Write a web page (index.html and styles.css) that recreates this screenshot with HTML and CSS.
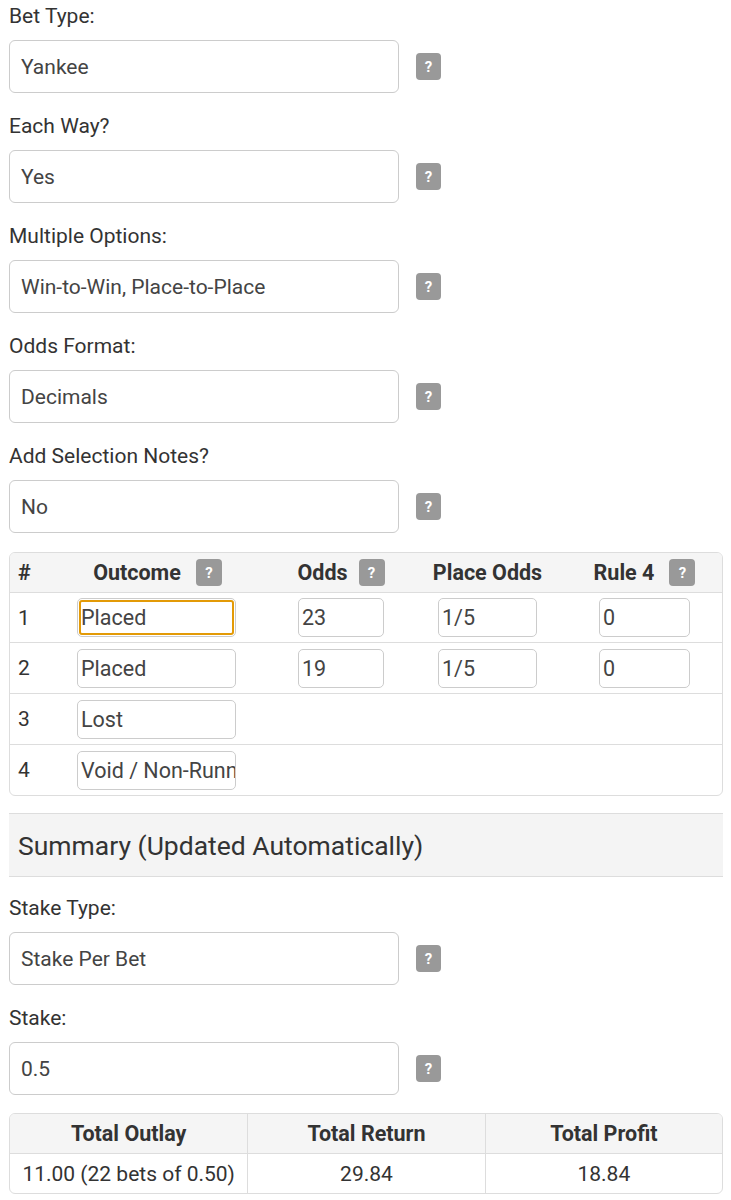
FILE: index.html
```html
<!DOCTYPE html>
<html>
<head>
<meta charset="utf-8">
<link rel="stylesheet" href="styles.css">
</head>
<body>
<div class="page">
  <div class="group">
    <div class="label">Bet Type:</div>
    <div class="field-row"><div class="select">Yankee</div><span class="help">?</span></div>
  </div>
  <div class="group">
    <div class="label">Each Way?</div>
    <div class="field-row"><div class="select">Yes</div><span class="help">?</span></div>
  </div>
  <div class="group">
    <div class="label">Multiple Options:</div>
    <div class="field-row"><div class="select">Win-to-Win, Place-to-Place</div><span class="help">?</span></div>
  </div>
  <div class="group">
    <div class="label">Odds Format:</div>
    <div class="field-row"><div class="select">Decimals</div><span class="help">?</span></div>
  </div>
  <div class="group">
    <div class="label">Add Selection Notes?</div>
    <div class="field-row"><div class="select">No</div><span class="help">?</span></div>
  </div>

  <div class="sel-table">
    <div class="row head">
      <div class="cell c-num left">#</div>
      <div class="cell c-out">Outcome<span class="help sm">?</span></div>
      <div class="cell c-odds">Odds<span class="help sm tight">?</span></div>
      <div class="cell c-place">Place Odds</div>
      <div class="cell c-rule">Rule 4<span class="help sm">?</span></div>
    </div>
    <div class="row first">
      <div class="cell c-num left">1</div>
      <div class="cell c-out"><div class="box w-out focus">Placed</div></div>
      <div class="cell c-odds"><div class="box w-odds">23</div></div>
      <div class="cell c-place"><div class="box w-place">1/5</div></div>
      <div class="cell c-rule"><div class="box w-rule">0</div></div>
    </div>
    <div class="row">
      <div class="cell c-num left">2</div>
      <div class="cell c-out"><div class="box w-out">Placed</div></div>
      <div class="cell c-odds"><div class="box w-odds">19</div></div>
      <div class="cell c-place"><div class="box w-place">1/5</div></div>
      <div class="cell c-rule"><div class="box w-rule">0</div></div>
    </div>
    <div class="row">
      <div class="cell c-num left">3</div>
      <div class="cell c-out"><div class="box w-out">Lost</div></div>
      <div class="cell c-odds"></div>
      <div class="cell c-place"></div>
      <div class="cell c-rule"></div>
    </div>
    <div class="row">
      <div class="cell c-num left">4</div>
      <div class="cell c-out"><div class="box w-out"><span class="clip">Void / Non-Runner</span></div></div>
      <div class="cell c-odds"></div>
      <div class="cell c-place"></div>
      <div class="cell c-rule"></div>
    </div>
  </div>

  <div class="summary">Summary (Updated Automatically)</div>

  <div class="group">
    <div class="label">Stake Type:</div>
    <div class="field-row"><div class="select">Stake Per Bet</div><span class="help">?</span></div>
  </div>
  <div class="group">
    <div class="label">Stake:</div>
    <div class="field-row"><div class="select">0.5</div><span class="help">?</span></div>
  </div>

  <div class="res-table">
    <div class="res-row head">
      <div class="res-cell">Total Outlay</div>
      <div class="res-cell">Total Return</div>
      <div class="res-cell">Total Profit</div>
    </div>
    <div class="res-row">
      <div class="res-cell">11.00 (22 bets of 0.50)</div>
      <div class="res-cell">29.84</div>
      <div class="res-cell">18.84</div>
    </div>
  </div>
</div>
</body>
</html>
```

FILE: styles.css
```css
* { box-sizing: border-box; }
html, body { margin: 0; padding: 0; background: #fff; }
body {
  font-family: Roboto, "Liberation Sans", sans-serif;
  font-size: 21px;
  color: #333;
}
.page {
  padding: 2px 8px 20px 9px;
}
.group {
  margin-bottom: 19px;
}
.label {
  line-height: 28px;
  height: 28px;
  margin-bottom: 10px;
  color: #333;
}
.field-row {
  display: flex;
  align-items: center;
}
.select {
  width: 390px;
  height: 53px;
  border: 1px solid #ccc;
  border-radius: 6px;
  padding: 0 11px;
  display: flex;
  align-items: center;
  color: #444;
  font-size: 21px;
}
.help {
  display: inline-flex;
  align-items: center;
  justify-content: center;
  width: 25px;
  height: 27px;
  margin-left: 17px;
  background: #999;
  color: #fff;
  border-radius: 4px;
  font-size: 15px;
  font-weight: 700;
  flex: none;
}
.help.sm {
  margin-left: 15px;
  width: 26px;
}
.help.tight { margin-left: 11px; }

.sel-table {
  border: 1px solid #ddd;
  border-radius: 6px;
  overflow: hidden;
}
.row {
  display: grid;
  grid-template-columns: 31px 233px 134px 159px 1fr;
  height: 51px;
  border-top: 1px solid #ddd;
  align-items: center;
}
.row.first { height: 50px; }
.row.head {
  border-top: none;
  height: 39px;
  background: #f5f5f5;
  font-weight: 700;
  font-size: 21.5px;
  color: #333;
}
.cell {
  display: flex;
  align-items: center;
  justify-content: center;
  height: 100%;
}
.cell.left {
  justify-content: flex-start;
  padding-left: 8px;
}
.box {
  height: 39px;
  border: 1px solid #ccc;
  border-radius: 5px;
  padding: 0 3px;
  display: flex;
  align-items: center;
  color: #444;
  white-space: nowrap;
  overflow: hidden;
  font-size: 21.5px;
}
.c-out .box { margin-right: 2px; }
.box.focus {
  outline: 2px solid #e39a06;
  outline-offset: -4px;
}
.w-out { width: 159px; }
.w-odds { width: 86px; }
.w-place { width: 99px; }
.w-rule { width: 91px; }

.summary {
  margin-top: 17px;
  height: 64px;
  background: #f4f4f4;
  border-top: 1px solid #ddd;
  border-bottom: 1px solid #ddd;
  display: flex;
  align-items: center;
  padding-left: 9px;
  font-size: 26.5px;
  color: #333;
  margin-bottom: 17px;
}

.res-table {
  border: 1px solid #ddd;
  border-radius: 6px;
  overflow: hidden;
  margin-top: -1px;
}
.res-row {
  display: grid;
  grid-template-columns: 1fr 1fr 1fr;
  height: 39px;
}
.res-row.head {
  background: #f5f5f5;
  font-weight: 700;
  font-size: 21.5px;
  height: 40px;
  border-bottom: 1px solid #ddd;
}
.res-cell {
  display: flex;
  align-items: center;
  justify-content: center;
  border-left: 1px solid #ddd;
  color: #333;
}
.res-cell:first-child { border-left: none; }
```
